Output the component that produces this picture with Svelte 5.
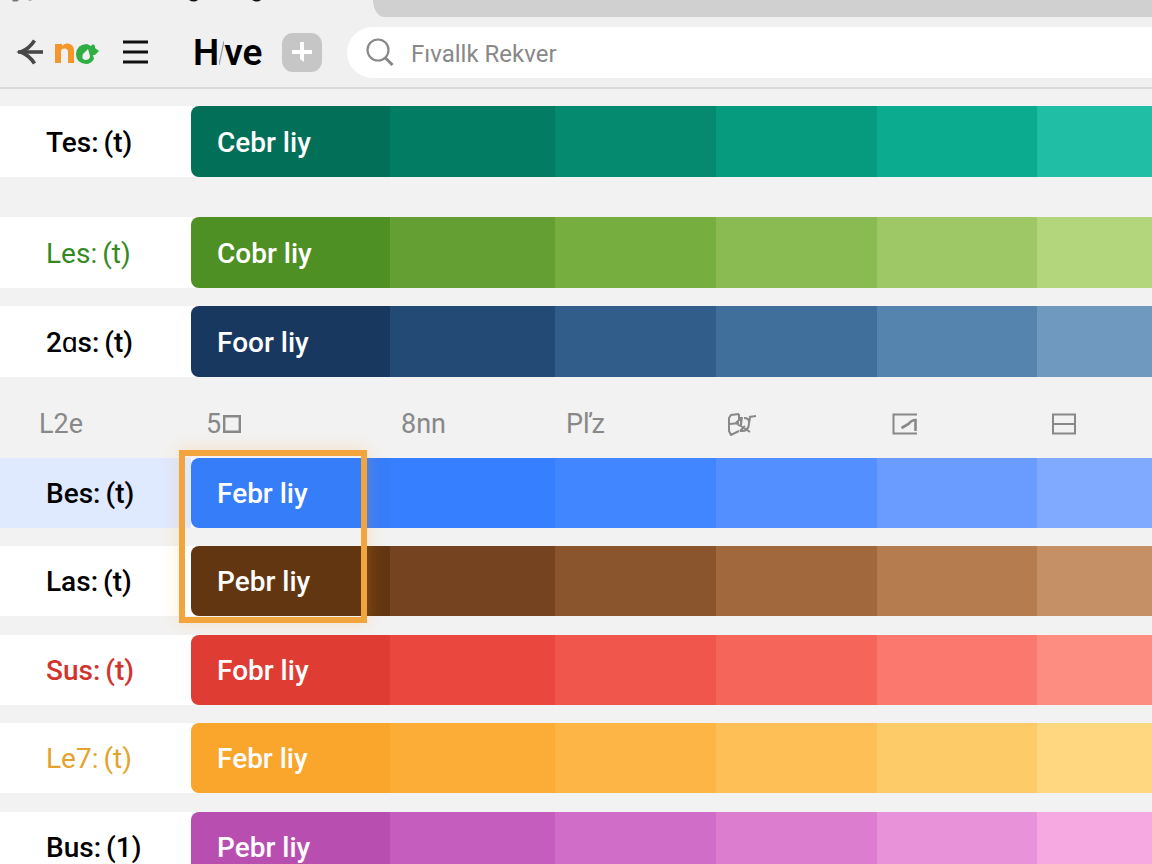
<script>
  const top = [
    { label: 'Tes:', mark: '(t)', tone: '#000', name: 'Cebr liy', cells: ['#026f58', '#027c63', '#058a70', '#069a7e', '#0aab8f', '#20bfa5'] },
    { label: 'Les:', mark: '(t)', tone: '#338a22', light: true, name: 'Cobr liy', cells: ['#4f9025', '#639f33', '#76ae40', '#8abb52', '#9dc865', '#b3d67d'] },
    { label: '2ɑs:', mark: '(t)', tone: '#000', name: 'Foor liy', cells: ['#19385f', '#224a74', '#305d8a', '#416f9b', '#5585ae', '#7099c0'] },
  ];
  const groups = [
    { picked: true, rows: [
      { label: 'Bes:', mark: '(t)', tone: '#000', active: true, name: 'Febr liy', cells: ['#367dfa', '#367fff', '#4286ff', '#538fff', '#6a9bff', '#80aaff'] },
      { label: 'Las:', mark: '(t)', tone: '#000', name: 'Pebr liy', cells: ['#633612', '#764320', '#8a542d', '#a2683d', '#b57c50', '#c69067'] },
    ] },
    { rows: [
      { label: 'Sus:', mark: '(t)', tone: '#d2342d', name: 'Fobr liy', cells: ['#df3d33', '#ea483e', '#f1564c', '#f6655a', '#fa786d', '#fd8c81'] },
      { label: 'Le7:', mark: '(t)', tone: '#e3a32c', light: true, name: 'Febr liy', cells: ['#faa52c', '#fcad37', '#fdb646', '#fdbf56', '#fecb69', '#ffd781'] },
    ] },
    { rows: [
      { label: 'Bus:', mark: '(1)', tone: '#000', name: 'Pebr liy', cells: ['#b84fb0', '#c45dbd', '#d06dc8', '#dc7dd0', '#e893d9', '#f5a9e0'] },
    ] },
  ];
</script>

{#snippet swatchRow(row)}
  <div class="row">
    <div class="label" class:active={row.active} class:light={row.light} style:color={row.tone}>
      <span>{row.label}</span><span>{row.mark}</span>
    </div>
    <div class="cells">
      {#each row.cells as c, i}
        <div class="cell" style:background-color={c}>{#if i === 0}{row.name}{/if}</div>
      {/each}
    </div>
  </div>
{/snippet}

<div class="page">
  <header>
    <div class="strip">
      <div class="tab">
        <svg width="280" height="3" viewBox="0 0 280 3">
          <g fill="#777"><path d="M12 0h7l-2 1.500h-4Z"/><path d="M28 0h4l-1 1h-2Z" opacity=".5"/></g>
          <path d="M189 0h9q-4 3-9 0ZM252 0h9q-4 3-9 0Z" fill="#111"/>
        </svg>
      </div>
      <div class="rest"></div>
    </div>
    <div class="bar">
      <button class="back" aria-label="Back">
        <svg width="28" height="28" viewBox="0 0 28 28" fill="none" stroke="#484848" stroke-width="3.600"><path d="M27 14H2"/><path d="M18.500 2.500C15 8 11 11.500 5 14c6 2.500 10 6 13.500 11.500"/></svg>
      </button>
      <a class="logo" href="#home" aria-label="Home">
        <svg width="46" height="24" viewBox="0 0 46 24">
          <path d="M1 23V4h7v2Q10 3.500 13 3.500 20 3.500 20 11V23H14V12Q14 8.500 10.500 8.500 7 8.500 7 12V23Z" fill="#f5962a"/>
          <path fill-rule="evenodd" d="M33 4 37 6 39 4 41 6 41 8 45 11 41 15 39 15 40 19Q37 24 32 24 22 23 22 14 23 4 33 4ZM34 9 29 14Q27 19 31 20 36 20 36 16Z" fill="#2fae43"/>
        </svg>
      </a>
      <button class="menu" aria-label="Menu">
        <svg width="26" height="24" viewBox="0 0 26 24" stroke="#111" stroke-width="2.800"><path d="M0 2h25M0 12h25M0 22h25"/></svg>
      </button>
      <h1><span>H</span><svg width="5" height="28" viewBox="0 0 5 28" stroke="#999" stroke-width="1.200"><path d="M5 2 0 26"/></svg><span>ve</span></h1>
      <button class="add" aria-label="Add">
        <svg width="20" height="20" viewBox="0 0 20 20" fill="#fff"><path d="M8 0h4v8h8v4h-8v8l-4-3v-5H0V8h8Z"/></svg>
      </button>
      <label class="search">
        <svg width="28" height="28" viewBox="0 0 28 28" fill="none" stroke="#888"><circle cx="12" cy="12" r="10.500" stroke-width="2.200"/><path d="m19.500 20 7 7" stroke-width="3"/></svg>
        <input type="search" placeholder="Fıvallk Rekver" aria-label="Search" />
      </label>
    </div>
  </header>

  <main>
    <section class="upper">
      {#each top as row}{@render swatchRow(row)}{/each}
    </section>

    <div class="heads">
      <span class="first">L2e</span>
      <div class="cols">
        <span class="five">5<svg width="18" height="18" viewBox="0 0 18 18" fill="none" stroke="#888" stroke-width="2.400"><path d="M1.200 1.200h15.600v15.600H1.200Z"/></svg></span>
        <span>8nn</span>
        <span>Pľz</span>
        <span>
          <svg width="30" height="24" viewBox="0 0 30 24" fill="none" stroke="#888" stroke-width="2"><path d="M12 2 4 3 2 6v13l2 4 8-4M3 12l9-1M12 2v6l-3 3 4 3M14 5v9l9 6M13 19q9 1 9-8l1-5M15 5l-1 8M17 6q5 0 5 4M22 5l7-1M13 19l5-5"/></svg>
        </span>
        <span class="glyph">
          <svg width="25" height="22" viewBox="0 0 25 22" fill="none" stroke="#888" stroke-width="2"><path d="M25 1.500H1.500v19H25"/><path d="M23.500 18V7q-4 0-7 4l-7 4" stroke-width="2.600"/></svg>
        </span>
        <span class="glyph">
          <svg width="24" height="22" viewBox="0 0 24 22" fill="none" stroke="#888" stroke-width="2"><path d="M1 1.500h22v19H1ZM1 11h22"/></svg>
        </span>
      </div>
    </div>

    <section class="lower">
      {#each groups as g}
        <div class="group">
          {#each g.rows as row}{@render swatchRow(row)}{/each}
          {#if g.picked}<div class="pick"></div>{/if}
        </div>
      {/each}
    </section>
  </main>
</div>

<style>
  :global(body) { margin: 0; background: #f2f2f2; }
  .page {
    --side: 191px;
    --cols: 199fr 165fr 161fr 161fr 160fr 115fr;
    font-family: Roboto, "Liberation Sans", sans-serif;
    background: #f2f2f2;
    height: 100vh;
    overflow: hidden;
  }
  header { background: #f0f0f0; border-bottom: 2px solid #dadada; }
  .strip { display: flex; height: 17px; }
  .tab { width: 373px; flex: none; }
  .rest { flex: 1; background: #d0d0d0; border-bottom-left-radius: 16px 24px; }
  .bar { display: flex; align-items: center; height: 70px; }
  button { border: 0; padding: 0; background: none; display: flex; align-items: center; justify-content: center; }
  svg { display: block; flex: none; }
  .back { margin-left: 16px; }
  .logo { margin-left: 10px; }
  .menu { margin-left: 23px; }
  h1 {
    margin: 0 0 0 44px; padding-top: 2px; width: 89px; flex: none; display: flex; align-items: center;
    font-size: 37px; line-height: 44px; font-weight: 600; color: #000;
  }
  .add { width: 40px; height: 39px; border-radius: 11px; background: #c6c6c6; flex: none; }
  .search {
    flex: 1; height: 51px; margin-left: 25px; padding-left: 19px; display: flex; align-items: center; gap: 17px;
    background: #fff; border-radius: 26px 0 0 26px;
  }
  input {
    flex: 1; min-width: 0; border: 0; outline: 0; padding: 3px 0 0; background: none;
    font: 24px/32px Roboto, "Liberation Sans", sans-serif; color: #444;
  }
  input::placeholder { color: #888; opacity: 1; }
  main { padding-top: 17px; }
  .row { display: flex; height: 70px; background: linear-gradient(90deg, #fff 200px, transparent 200px); }
  .upper .row { height: 71px; margin-bottom: 18px; }
  .upper .row:first-child { margin-bottom: 40px; }
  .upper .row:last-child { margin-bottom: 0; }
  .label, .cell {
    display: flex; align-items: center; box-sizing: border-box; padding-top: 2px;
    font-size: 28px; line-height: 34px; font-weight: 500; white-space: nowrap;
  }
  .label { width: var(--side); flex: none; padding-left: 46px; gap: 5px; background: #fff; }
  .label.active { background: #dfe9ff; }
  .label.light { font-weight: 400; }
  .cells { flex: 1; display: grid; grid-template-columns: var(--cols); border-radius: 8px 0 0 8px; overflow: hidden; }
  .cell { min-width: 0; color: #fff; }
  .cell:first-child { padding-left: 26px; }
  .heads {
    display: flex; align-items: center; height: 81px; padding: 24px 0 12px; box-sizing: border-box;
    color: #888; font-size: 27px; line-height: 32px;
  }
  .first { width: var(--side); flex: none; box-sizing: border-box; padding-left: 39px; }
  .cols { flex: 1; display: grid; grid-template-columns: var(--cols); align-items: center; }
  .cols span { padding-left: 11px; }
  .cols .five { padding-left: 15px; display: flex; align-items: center; gap: 2px; }
  .cols .glyph { padding-left: 15px; }
  .lower, .group { display: flex; flex-direction: column; }
  .lower { gap: 19px; }
  .group { gap: 18px; position: relative; }
  .pick {
    position: absolute; left: 179px; top: -8px; bottom: -7px; width: 188px; box-sizing: border-box;
    border: 6px solid #f2a53c; box-shadow: 0 0 16px rgba(255, 170, 60, 0.25);
  }
</style>
